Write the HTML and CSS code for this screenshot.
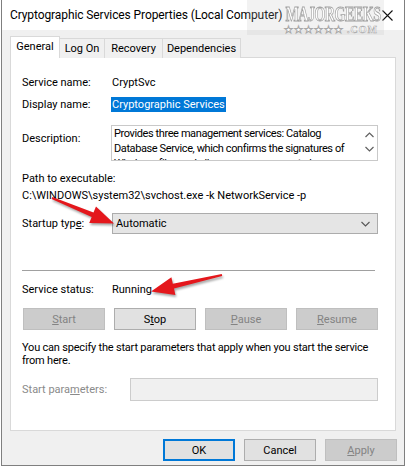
FILE: index.html
```html
<!DOCTYPE html>
<html lang="en">
<head>
  <meta charset="UTF-8">
  <title>Cryptographic Services Properties (Local Computer)</title>
  <link rel="stylesheet" href="styles.css">
</head>
<body>
  <div class="window">
    <div class="titlebar">
      <span class="title">Cryptographic Services Properties (Local Computer)</span>
      <svg class="close" width="11" height="11" viewBox="0 0 11 11">
        <path d="M0.5 0.5 L10.5 10.5 M10.5 0.5 L0.5 10.5" stroke="#111" stroke-width="1.1" fill="none"/>
      </svg>
    </div>

    <div class="dialog">
      <div class="tabs">
        <div class="tab active">General</div>
        <div class="tab tab-logon">Log On</div>
        <div class="tab tab-recovery">Recovery</div>
        <div class="tab tab-deps">Dependencies</div>
      </div>

      <div class="panel">
        <div class="field">
          <span class="label">Service name:</span>
          <span>CryptSvc</span>
        </div>
        <div class="field field-display">
          <span class="label">Display name:</span>
          <span><span class="selected">Cryptographic Services</span></span>
        </div>
        <div class="field field-desc">
          <span class="label">Description:</span>
          <div class="textbox">
            <div class="textbox-text">Provides three management services: Catalog<br>Database Service, which confirms the signatures of<br>Windows files and allows new programs to be<br>installed.</div>
            <div class="scroller">
              <svg width="9" height="6" viewBox="0 0 9 6"><path d="M0.5 5 L4.5 1 L8.5 5" stroke="#606060" stroke-width="1.2" fill="none"/></svg>
              <svg width="9" height="6" viewBox="0 0 9 6"><path d="M0.5 1 L4.5 5 L8.5 1" stroke="#606060" stroke-width="1.2" fill="none"/></svg>
            </div>
          </div>
        </div>

        <div class="path-label">Path to executable:</div>
        <div class="path">C:\WINDOWS\system32\svchost.exe -k NetworkService -p</div>

        <div class="field field-startup">
          <span class="label">Startup typ<u>e</u>:</span>
          <div class="combo">
            <span>Automatic</span>
            <svg width="9" height="6" viewBox="0 0 9 6"><path d="M0.5 1 L4.5 5 L8.5 1" stroke="#555" stroke-width="1.1" fill="none"/></svg>
          </div>
        </div>

        <div class="separator"></div>

        <div class="field field-status">
          <span class="label">Service status:</span>
          <span>Running</span>
        </div>

        <div class="service-buttons">
          <button class="btn" disabled><u>S</u>tart</button>
          <button class="btn">S<u>t</u>op</button>
          <button class="btn" disabled><u>P</u>ause</button>
          <button class="btn" disabled><u>R</u>esume</button>
        </div>

        <p class="hint">You can specify the start parameters that apply when you start the service from here.</p>

        <div class="params">
          <span class="label disabled">Start para<u>m</u>eters:</span>
          <div class="params-input"></div>
        </div>
      </div>

      <div class="actions">
        <button class="btn btn-default">OK</button>
        <button class="btn">Cancel</button>
        <button class="btn" disabled><u>A</u>pply</button>
      </div>
    </div>
  </div>

  <!-- watermark + annotation arrows laid over the screenshot -->
  <div class="watermark">
    <span class="wm-name">MAJORGEEKS</span>
    <span class="wm-sub">★★★★★★ .COM</span>
  </div>

  <svg class="arrows" width="406" height="468" viewBox="0 0 406 468">
    <g fill="#e4171c">
      <polygon points="52.4,197.1 93.5,212.4 96.0,206.4 114,223.5 89.2,223.0 91.7,217.0 51.6,198.9"/>
      <polygon points="221.8,274.0 172.8,283.7 171.4,277.3 151,291.5 175.4,294.9 174.0,288.5 222.2,276.0"/>
    </g>
  </svg>
</body>
</html>
```

FILE: styles.css
```css
* {
  box-sizing: border-box;
}

body {
  margin: 0;
  position: relative;
  width: 406px;
  height: 468px;
  background: #fff;
  font-family: Roboto, "Liberation Sans", sans-serif;
  font-size: 11px;
  color: #000;
}

.window {
  margin-left: 1px;
  width: 404px;
  height: 466px;
  border: 1px solid #7f7f7f;
  border-top: none;
  background: #f0f0f0;
  display: flex;
  flex-direction: column;
}

.titlebar {
  height: 30px;
  background: #fff;
  display: flex;
  align-items: center;
  justify-content: space-between;
  padding: 0 11px 0 8px;
}

.title {
  font-size: 12px;
  letter-spacing: -0.1px;
}

.dialog {
  padding: 6px 8px 0 8px;
}

/* tabs */
.tabs {
  display: flex;
  align-items: flex-end;
  height: 22px;
  margin-bottom: -1px;
  position: relative;
  z-index: 1;
}

.tab {
  height: 20px;
  line-height: 19px;
  border: 1px solid #d9d9d9;
  border-bottom: none;
  margin-left: -1px;
  background: #f0f0f0;
  text-align: center;
}

.tab.active {
  margin-left: 0;
  width: 50px;
  height: 22px;
  line-height: 20px;
  background: #fff;
}

.tab-logon { width: 46px; }
.tab-recovery { width: 59px; }
.tab-deps { width: 79px; }

.panel {
  height: 374px;
  background: #fff;
  border: 1px solid #d9d9d9;
  padding: 17px 17px 0 11px;
}

.field {
  display: grid;
  grid-template-columns: 90px 1fr;
  align-items: center;
  line-height: 16px;
}

.field-display {
  margin-top: 6px;
}

.selected {
  background: #0078d7;
  color: #fff;
  margin-left: -1px;
  padding: 1px 1px;
}

.field-desc {
  margin-top: 12px;
  align-items: start;
}

.field-desc .label {
  padding-top: 6px;
}

.textbox {
  margin-left: -1px;
  height: 36px;
  border: 1px solid #c9c9c9;
  display: flex;
}

.textbox-text {
  flex: 1;
  padding: 0 0 0 2px;
  line-height: 15px;
  letter-spacing: -0.4px;
  white-space: nowrap;
  overflow: hidden;
  height: 34px;
}

.scroller {
  width: 16px;
  display: flex;
  flex-direction: column;
  align-items: center;
  gap: 8px;
  padding-top: 6px;
}

.scroller svg {
  display: block;
}

.path-label {
  margin-top: 10px;
  line-height: 16px;
}

.path {
  margin-top: 1px;
  line-height: 16px;
}

.field-startup {
  margin-top: 9px;
}

.combo {
  height: 21px;
  background: #e5e5e5;
  border: 1px solid #acacac;
  display: flex;
  align-items: center;
  justify-content: space-between;
  padding: 0 7px 0 3px;
}

.separator {
  margin-top: 36px;
  width: 353px;
  border-top: 1px solid #a0a0a0;
  border-bottom: 1px solid #fff;
}

.field-status {
  margin-top: 10px;
}

.service-buttons {
  margin-top: 10px;
  display: grid;
  grid-template-columns: repeat(4, 82px);
  justify-content: space-between;
  padding-left: 1px;
}

.btn {
  height: 22px;
  padding: 0;
  font-family: inherit;
  font-size: 11px;
  color: #000;
  background: #e1e1e1;
  border: 1px solid #adadad;
}

.btn:disabled {
  background: #cccccc;
  border-color: #bfbfbf;
  color: #838383;
}

.hint {
  margin: 11px 0 0 0;
  line-height: 13px;
  letter-spacing: -0.2px;
}

.params {
  margin-top: 11px;
  display: grid;
  grid-template-columns: 108px 1fr;
  align-items: center;
}

.label.disabled {
  color: #8a8a8a;
}

.params-input {
  height: 23px;
  background: #f0f0f0;
  border: 1px solid #cccccc;
}

.actions {
  margin-top: 8px;
  margin-right: -1px;
  display: flex;
  justify-content: flex-end;
  gap: 9px;
}

.actions .btn {
  width: 72px;
  height: 22px;
}

.btn-default {
  border: 2px solid #0078d7;
}

/* overlays */
.watermark {
  position: absolute;
  top: 0;
  left: 247px;
  width: 137px;
  height: 35px;
  background: rgba(190, 190, 190, 0.2);
  display: flex;
  flex-direction: column;
  align-items: flex-end;
  padding: 5px 4px 0 0;
  pointer-events: none;
}

.wm-name {
  font-family: "Liberation Serif", serif;
  font-weight: bold;
  font-size: 22px;
  line-height: 18px;
  letter-spacing: -0.8px;
  transform: scaleX(0.64);
  transform-origin: right center;
  color: rgba(255, 255, 255, 0.9);
  -webkit-text-stroke: 0.9px #a0a0a0;
}

.wm-sub {
  font-family: "Liberation Serif", serif;
  font-weight: bold;
  font-size: 10px;
  line-height: 10px;
  letter-spacing: 1px;
  margin-top: 2px;
  color: rgba(255, 255, 255, 0.9);
  -webkit-text-stroke: 0.5px #a8a8a8;
  padding-right: 2px;
}

.arrows {
  position: absolute;
  top: 0;
  left: 0;
  pointer-events: none;
  filter: drop-shadow(1px 2px 1px rgba(0, 0, 0, 0.35));
}
```
